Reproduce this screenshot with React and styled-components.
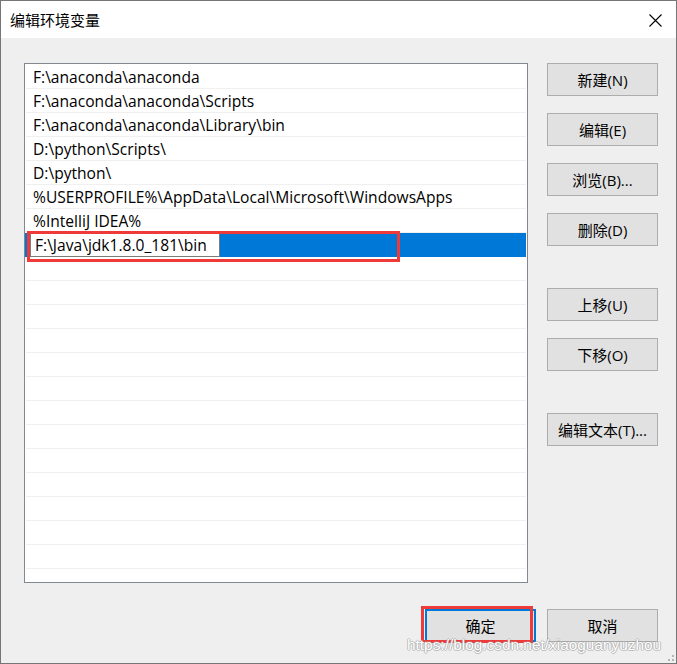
import React from "react";
import styled, { createGlobalStyle } from "styled-components";

const Global = createGlobalStyle`
  html, body { margin: 0; padding: 0; background: #efefef; }
  body { font-family: "Open Sans", "Noto Sans CJK SC", sans-serif; font-size: 15px; color: #000; }
  * { box-sizing: border-box; }
`;

const Window = styled.div`
  position: relative;
  width: 677px;
  height: 664px;
  border: 1px solid #767676;
  background: #efefef;
  display: flex;
  flex-direction: column;
  overflow: hidden;
`;

const TitleBar = styled.div`
  height: 37px;
  background: #fff;
  display: flex;
  align-items: center;
  justify-content: space-between;
  padding: 0 14px 0 9px;
  flex-shrink: 0;
`;

const Title = styled.div`
  font-family: "Noto Sans CJK SC", sans-serif;
  font-size: 15px;
  line-height: 20px;
  color: #000;
`;

const CloseBtn = styled.div`
  width: 14px;
  height: 14px;
  display: flex;
  align-items: center;
  justify-content: center;
  margin-top: 1px;
`;

const Body = styled.div`
  flex: 1;
  display: flex;
  flex-direction: column;
  padding: 25px 18px 0 23px;
`;

const MainRow = styled.div`
  display: flex;
  align-items: flex-start;
`;

const ListBox = styled.div`
  position: relative;
  width: 504px;
  height: 520px;
  border: 1px solid #828790;
  background: #fff;
  padding-top: 1px;
  overflow: hidden;
  font-size: 15.6px;
`;

const Row = styled.div`
  height: 24px;
  margin: 0 1px;
  padding-left: ${(p) => (p.$selected ? "4px" : "7px")};
  display: flex;
  align-items: center;
  border-bottom: 1px solid ${(p) => (p.$selected ? "#0078d7" : "#f0f0f0")};
  background: ${(p) => (p.$selected ? "#0078d7" : "#fff")};
  white-space: nowrap;
  line-height: 24px;
  margin-left: ${(p) => (p.$selected ? "0" : "1px")};
`;

const Editor = styled.div`
  width: 190px;
  height: 24px;
  margin-left: 1px;
  background: #fff;
  border: 1px solid #7a7a7a;
  padding-left: 4px;
  display: flex;
  align-items: center;
  line-height: 22px;
`;

const Annotation = styled.div`
  position: absolute;
  border: 3px solid #ef3a3a;
  pointer-events: none;
`;

const ButtonCol = styled.div`
  display: flex;
  flex-direction: column;
  margin-left: 19px;
`;

const Btn = styled.div`
  position: relative;
  width: 111px;
  height: 33px;
  margin-top: ${(p) => p.$top || 0}px;
  background: #e1e1e1;
  border: ${(p) => (p.$focused ? "2px solid #0078d7" : "1px solid #adadad")};
  display: flex;
  align-items: center;
  justify-content: center;
  font-size: 15px;
  line-height: 20px;
  color: #000;
  white-space: nowrap;
`;

const Footer = styled.div`
  display: flex;
  justify-content: flex-end;
  gap: 11px;
  margin-top: 26px;
`;

const Watermark = styled.div`
  position: absolute;
  left: 406px;
  top: 635px;
  font-family: "Liberation Sans", Arial, sans-serif;
  font-size: 15.4px;
  color: #ffffff;
  text-shadow: 1px 0 0 rgba(150, 150, 150, 0.55), -1px 0 0 rgba(150, 150, 150, 0.55),
    0 1px 0 rgba(150, 150, 150, 0.55), 0 -1px 0 rgba(150, 150, 150, 0.45);
  white-space: nowrap;
  pointer-events: none;
`;

const Grip = styled.div`
  position: absolute;
  right: 1px;
  bottom: 1px;
  width: 12px;
  height: 12px;
`;

const items = [
  "F:\\anaconda\\anaconda",
  "F:\\anaconda\\anaconda\\Scripts",
  "F:\\anaconda\\anaconda\\Library\\bin",
  "D:\\python\\Scripts\\",
  "D:\\python\\",
  "%USERPROFILE%\\AppData\\Local\\Microsoft\\WindowsApps",
  "%IntelliJ IDEA%",
];

export default function App() {
  const empties = Array.from({ length: 14 });
  return (
    <>
      <Global />
      <Window>
        <TitleBar>
          <Title>编辑环境变量</Title>
          <CloseBtn>
            <svg width="13" height="13" viewBox="0 0 13 13">
              <path d="M0.5 0.5 L12.5 12.5 M12.5 0.5 L0.5 12.5" stroke="#000" strokeWidth="1.1" fill="none" />
            </svg>
          </CloseBtn>
        </TitleBar>
        <Body>
          <MainRow>
            <ListBox>
              {items.map((t) => (
                <Row key={t}>{t}</Row>
              ))}
              <Row $selected>
                <Editor>F:\Java\jdk1.8.0_181\bin</Editor>
              </Row>
              {empties.map((_, i) => (
                <Row key={i} />
              ))}
              <Annotation style={{ left: 2, top: 167, width: 373, height: 31 }} />
            </ListBox>
            <ButtonCol>
              <Btn>新建(N)</Btn>
              <Btn $top={17}>编辑(E)</Btn>
              <Btn $top={17}>浏览(B)...</Btn>
              <Btn $top={17}>删除(D)</Btn>
              <Btn $top={42}>上移(U)</Btn>
              <Btn $top={17}>下移(O)</Btn>
              <Btn $top={42}>编辑文本(T)...</Btn>
            </ButtonCol>
          </MainRow>
          <Footer>
            <Btn $focused>
              确定
              <Annotation style={{ left: -6, top: -5, width: 112, height: 37 }} />
            </Btn>
            <Btn>取消</Btn>
          </Footer>
        </Body>
        <Watermark>https://blog.csdn.net/xiaoguanyuzhou</Watermark>
        <Grip>
          <svg width="12" height="12" viewBox="0 0 12 12">
            <g fill="#b4b4b4">
              <rect x="9" y="1" width="2" height="2" />
              <rect x="5" y="5" width="2" height="2" />
              <rect x="9" y="5" width="2" height="2" />
              <rect x="1" y="9" width="2" height="2" />
              <rect x="5" y="9" width="2" height="2" />
              <rect x="9" y="9" width="2" height="2" />
            </g>
          </svg>
        </Grip>
      </Window>
    </>
  );
}
